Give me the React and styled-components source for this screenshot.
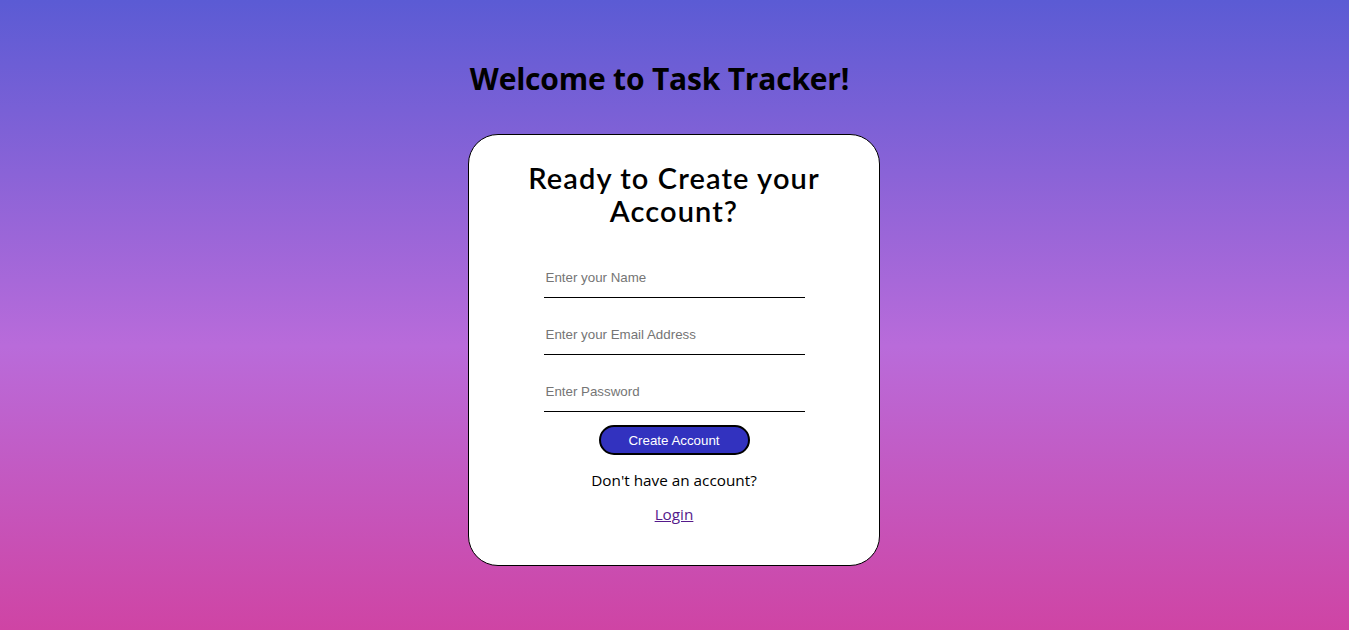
import React from "react";
import styled, { createGlobalStyle } from "styled-components";

const GlobalStyle = createGlobalStyle`
  html, body {
    margin: 0;
    padding: 0;
  }
  body {
    min-height: 100vh;
    background: linear-gradient(to bottom, #5b5bd4 0%, #b96bda 55%, #cf44a4 100%);
    font-family: "Open Sans", "Noto Sans", sans-serif;
  }
`;

const Page = styled.div`
  min-height: 630px;
  display: flex;
  flex-direction: column;
  align-items: center;
  padding-top: 58px;
  box-sizing: border-box;
`;

const Title = styled.h1`
  margin: 0 30px 34px 0;
  font-family: "Open Sans", "Noto Sans", sans-serif;
  font-size: 30px;
  font-weight: 700;
  line-height: 42px;
  color: #000;
  letter-spacing: -0.2px;
`;

const Card = styled.div`
  width: 412px;
  height: 432px;
  margin-right: 1px;
  box-sizing: border-box;
  background: #fff;
  border: 1px solid #000;
  border-radius: 30px;
  display: flex;
  flex-direction: column;
  align-items: center;
  padding-top: 26px;
`;

const Heading = styled.h2`
  margin: 0 0 31px;
  width: 340px;
  text-align: center;
  font-family: "Lato", "Noto Sans", sans-serif;
  font-size: 29px;
  font-weight: 600;
  line-height: 33px;
  color: #000;
  letter-spacing: 1.1px;
`;

const Form = styled.form`
  display: flex;
  flex-direction: column;
  align-items: center;
`;

const Input = styled.input`
  width: 261px;
  height: 40px;
  box-sizing: border-box;
  margin-bottom: 17px;
  padding: 0 2px;
  border: none;
  border-bottom: 1px solid #000;
  outline: none;
  background: transparent;
  font-family: "Liberation Sans", Arial, sans-serif;
  font-size: 13.333px;
  color: #000;
  &::placeholder {
    color: #757575;
  }
  &:last-of-type {
    margin-bottom: 13px;
  }
`;

const Button = styled.button`
  width: 151px;
  height: 30px;
  border: 2px solid #000;
  border-radius: 15px;
  background: #3232bf;
  color: #fff;
  font-family: "Liberation Sans", Arial, sans-serif;
  font-size: 13.333px;
  cursor: pointer;
`;

const Note = styled.p`
  margin: 14px 0 0;
  font-family: "Open Sans", "Noto Sans", sans-serif;
  font-size: 15.3px;
  line-height: 22px;
  color: #000;
`;

const LoginLink = styled.a`
  margin-top: 12px;
  font-family: "Open Sans", "Noto Sans", sans-serif;
  font-size: 15.3px;
  line-height: 22px;
  color: #551a8b;
  text-decoration: underline;
`;

export default function App() {
  return (
    <>
      <GlobalStyle />
      <Page>
        <Title>Welcome to Task Tracker!</Title>
        <Card>
          <Heading>Ready to Create your Account?</Heading>
          <Form onSubmit={(e) => e.preventDefault()}>
            <Input type="text" placeholder="Enter your Name" />
            <Input type="email" placeholder="Enter your Email Address" />
            <Input type="password" placeholder="Enter Password" />
            <Button type="submit">Create Account</Button>
          </Form>
          <Note>Don't have an account?</Note>
          <LoginLink href="#">Login</LoginLink>
        </Card>
      </Page>
    </>
  );
}
